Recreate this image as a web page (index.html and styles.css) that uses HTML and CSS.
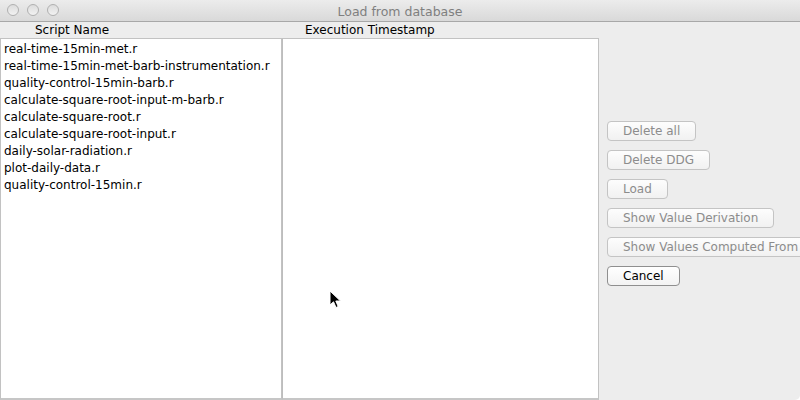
FILE: index.html
```html
<!DOCTYPE html>
<html>
<head>
<meta charset="utf-8">
<link rel="stylesheet" href="styles.css">
</head>
<body>
<div class="window">
  <div class="titlebar">
    <div class="lights">
      <span class="light"></span><span class="light"></span><span class="light"></span>
    </div>
    <div class="title">Load from database</div>
  </div>
  <div class="content">
    <div class="col col-names">
      <div class="hdr hdr-names">Script Name</div>
      <div class="list">
        <div class="row">real-time-15min-met.r</div>
        <div class="row">real-time-15min-met-barb-instrumentation.r</div>
        <div class="row">quality-control-15min-barb.r</div>
        <div class="row">calculate-square-root-input-m-barb.r</div>
        <div class="row">calculate-square-root.r</div>
        <div class="row">calculate-square-root-input.r</div>
        <div class="row">daily-solar-radiation.r</div>
        <div class="row">plot-daily-data.r</div>
        <div class="row">quality-control-15min.r</div>
      </div>
    </div>
    <div class="col col-times">
      <div class="hdr hdr-times">Execution Timestamp</div>
      <div class="list"></div>
    </div>
    <div class="buttons">
      <button class="btn" disabled>Delete all</button>
      <button class="btn" disabled>Delete DDG</button>
      <button class="btn" disabled>Load</button>
      <button class="btn" disabled>Show Value Derivation</button>
      <button class="btn btn-wide" disabled>Show Values Computed From</button>
      <button class="btn btn-default">Cancel</button>
    </div>
  </div>
  <svg class="cursor" width="13" height="20" viewBox="0 0 13 20">
    <path d="M1 1 L1 15 L4.5 11.8 L7 17.5 L9.2 16.5 L6.8 11 L11.5 11 Z" fill="#000" stroke="#fff" stroke-width="1"/>
  </svg>
</div>
</body>
</html>
```
FILE: styles.css
```css
* { box-sizing: border-box; }
html, body {
  margin: 0;
  padding: 0;
  background: #ffffff;
}
body {
  font-family: "DejaVu Sans", "Liberation Sans", sans-serif;
  font-size: 12px;
  color: #000;
}
.window {
  position: relative;
  width: 800px;
  height: 400px;
  background: #ededed;
  border-bottom-right-radius: 5px;
  overflow: hidden;
  display: flex;
  flex-direction: column;
}
.titlebar {
  position: relative;
  height: 22px;
  flex: none;
  background: linear-gradient(#ececec, #d9d9d9);
  border-bottom: 1px solid #a8a8a8;
  display: flex;
  align-items: center;
  justify-content: center;
}
.lights {
  position: absolute;
  left: 7px;
  top: 4px;
  display: flex;
  gap: 8px;
}
.light {
  width: 12px;
  height: 12px;
  border-radius: 50%;
  background: linear-gradient(#dcdcdc, #f2f2f2);
  border: 1px solid #b0b0b0;
}
.title {
  font-size: 12.5px;
  color: #7f7f7f;
  padding-top: 1px;
}
.content {
  flex: 1;
  display: flex;
  min-height: 0;
}
.col {
  display: flex;
  flex-direction: column;
  flex: none;
}
.col-names { width: 282px; }
.col-times { width: 317px; }
.hdr {
  height: 16px;
  line-height: 16px;
  flex: none;
  white-space: nowrap;
}
.hdr-names { padding-left: 35px; }
.hdr-times { padding-left: 23px; }
.list {
  flex: 1;
  background: #fff;
  border: 1px solid #c2c2c2;
  border-bottom: 2px solid #c6c6c6;
  padding-top: 2px;
}
.col-times .list { border-left-color: #bdbdbd; }
.row {
  height: 17px;
  line-height: 17px;
  padding-left: 3px;
  white-space: nowrap;
}
.buttons {
  flex: 1;
  display: flex;
  flex-direction: column;
  align-items: flex-start;
  gap: 9px;
  padding: 99px 0 0 8px;
  min-width: 0;
}
.btn {
  font-family: inherit;
  font-size: 12px;
  height: 20px;
  padding: 0 15px;
  border: 1px solid #c4c4c4;
  border-radius: 4px;
  background: linear-gradient(#fdfdfd, #f1f1f1);
  color: #8c8c8c;
  white-space: nowrap;
  flex: none;
  line-height: 18px;
}
.btn-wide { padding-right: 20px; }
.btn-default {
  color: #000;
  border-color: #8f8f8f;
  background: linear-gradient(#ffffff, #f3f3f3);
}
.cursor {
  position: absolute;
  left: 329px;
  top: 290px;
}
```
